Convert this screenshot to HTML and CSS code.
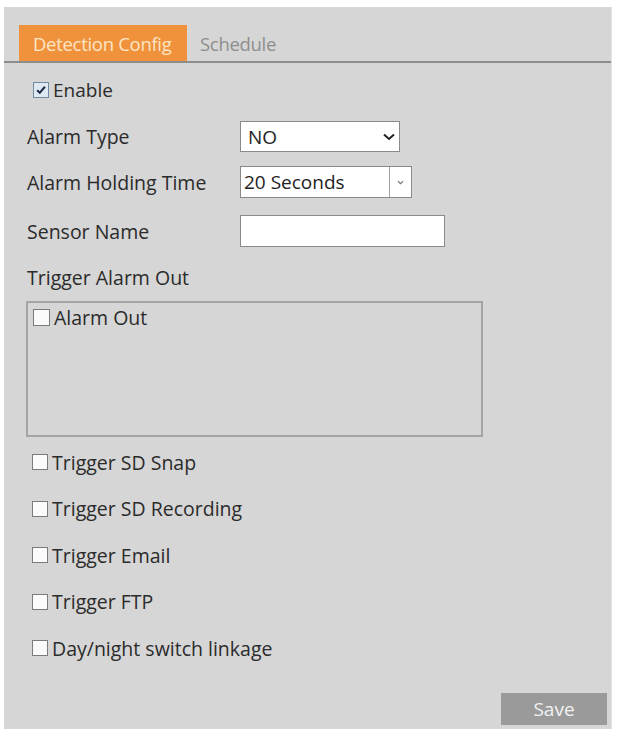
FILE: index.html
```html
<!DOCTYPE html>
<html>
<head>
<meta charset="utf-8">
<link rel="stylesheet" href="styles.css">
</head>
<body>
<div class="panel">
  <div class="tabs">
    <div class="tab active">Detection Config</div>
    <div class="tab">Schedule</div>
  </div>
  <div class="content">
    <div class="row enable-row">
      <span class="cb checked"><svg viewBox="0 0 14 14" width="12" height="12"><path d="M2.5 7.2 L5.6 10.2 L11.6 3.2" fill="none" stroke="#1f2f4a" stroke-width="2.4"/></svg></span>
      <span class="cb-label">Enable</span>
    </div>
    <div class="row field-row r-type">
      <span class="label">Alarm Type</span>
      <div class="select sel-type">
        <span class="val">NO</span>
        <svg class="chev" viewBox="0 0 12 8" width="12" height="8"><path d="M1 1.5 L6 6 L11 1.5" fill="none" stroke="#222" stroke-width="2"/></svg>
      </div>
    </div>
    <div class="row field-row r-hold">
      <span class="label">Alarm Holding Time</span>
      <div class="select sel-hold">
        <span class="val">20 Seconds</span>
        <span class="btn"><svg viewBox="0 0 8 6" width="7" height="5"><path d="M1 1.5 L4 4.5 L7 1.5" fill="none" stroke="#777" stroke-width="1.4"/></svg></span>
      </div>
    </div>
    <div class="row field-row r-name">
      <span class="label">Sensor Name</span>
      <div class="input"></div>
    </div>
    <div class="row r-trigger">
      <span class="label">Trigger Alarm Out</span>
    </div>
    <div class="outbox">
      <div class="row box-row">
        <span class="cb"></span><span class="cb-label">Alarm Out</span>
      </div>
    </div>
    <div class="checks">
      <div class="row check-row"><span class="cb"></span><span class="cb-label">Trigger SD Snap</span></div>
      <div class="row check-row"><span class="cb"></span><span class="cb-label">Trigger SD Recording</span></div>
      <div class="row check-row"><span class="cb"></span><span class="cb-label">Trigger Email</span></div>
      <div class="row check-row"><span class="cb"></span><span class="cb-label">Trigger FTP</span></div>
      <div class="row check-row"><span class="cb"></span><span class="cb-label">Day/night switch linkage</span></div>
    </div>
    <div class="actions">
      <div class="save">Save</div>
    </div>
  </div>
</div>
</body>
</html>
```

FILE: styles.css
```css
html, body {
  margin: 0;
  padding: 0;
  background: #ffffff;
}
body {
  font-family: "Open Sans", "Noto Sans", sans-serif;
  color: #2b2b2b;
}
.panel {
  margin: 7px 0 0 4px;
  width: 608px;
  height: 722px;
  background: #d6d6d6;
  box-sizing: border-box;
  border-right: 1px solid #e2e2e2;
  display: flex;
  flex-direction: column;
}
.tabs {
  display: flex;
  align-items: stretch;
  padding: 18px 0 0 15px;
  height: 36px;
  border-bottom: 2px solid #8d8d8d;
}
.tab {
  display: flex;
  align-items: center;
  font-size: 18.5px;
  padding: 0 13px;
  color: #8e8e8e;
  letter-spacing: -0.3px;
}
.tab.active {
  background: #f0923c;
  color: #fde5c6;
  width: 168px;
  box-sizing: border-box;
  padding-left: 14px;
}
.content {
  flex: 1;
  display: flex;
  flex-direction: column;
  padding-left: 23px;
}
.row {
  display: flex;
  align-items: center;
}
.label {
  font-size: 19.5px;
  width: 213px;
  white-space: nowrap;
}
.cb {
  width: 14px;
  height: 14px;
  border: 1px solid #7b7b7b;
  background: #fbfbfb;
  display: flex;
  align-items: center;
  justify-content: center;
  flex: none;
}
.cb.checked {
  background: #dfe9f2;
  border-color: #6f8aa3;
}
.cb-label {
  font-size: 19.5px;
  margin-left: 4px;
  white-space: nowrap;
}
.enable-row {
  margin-top: 15px;
  height: 24px;
  padding-left: 6px;
}
.enable-row .cb-label {
  font-size: 19px;
}
.r-type {
  margin-top: 19px;
  height: 31px;
}
.r-hold {
  margin-top: 14px;
  height: 32px;
}
.r-name {
  margin-top: 17px;
  height: 32px;
}
.r-trigger {
  margin-top: 18px;
  height: 24px;
}
.select, .input {
  height: 100%;
  box-sizing: border-box;
  border: 1px solid #8a8a8a;
  background: #ffffff;
  display: flex;
  align-items: center;
}
.val {
  font-size: 19px;
  color: #222;
}
.sel-type {
  width: 160px;
  padding: 0 4px 0 7px;
  justify-content: space-between;
}
.sel-hold {
  width: 172px;
  padding-left: 3px;
  justify-content: space-between;
}
.btn {
  width: 21px;
  height: 100%;
  border-left: 1px solid #a0a0a0;
  display: flex;
  align-items: center;
  justify-content: center;
}
.input {
  width: 205px;
}
.outbox {
  margin-top: 12px;
  margin-left: -1px;
  width: 457px;
  height: 136px;
  box-sizing: border-box;
  border: 2px solid #a4a4a4;
  padding: 3px 0 0 5px;
}
.box-row {
  height: 22px;
}
.box-row .cb {
  width: 15px;
  height: 15px;
}
.checks {
  display: flex;
  flex-direction: column;
  margin-top: 13px;
  gap: 22.5px;
  padding-left: 5px;
}
.check-row {
  height: 24px;
}
.actions {
  display: flex;
  justify-content: flex-end;
  margin-top: auto;
  padding: 0 4px 4px 0;
}
.save {
  width: 106px;
  height: 32px;
  background: #9a9a9a;
  color: #f2f2f2;
  font-size: 19px;
  display: flex;
  align-items: center;
  justify-content: center;
}
```
